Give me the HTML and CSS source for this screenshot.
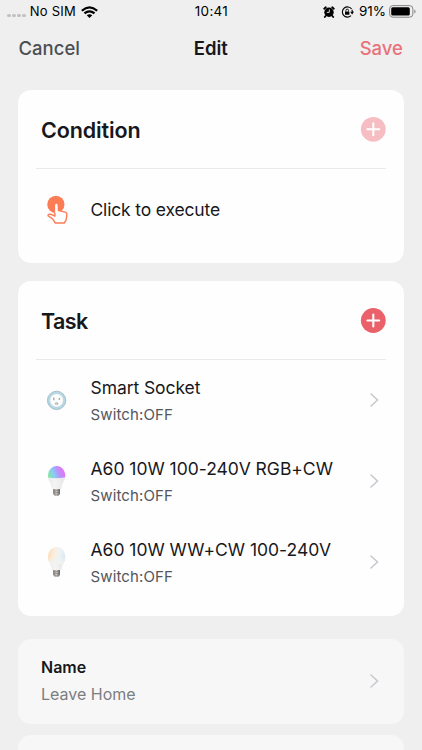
FILE: index.html
```
<!DOCTYPE html>
<html lang="en">
<head>
<meta charset="utf-8">
<meta name="viewport" content="width=device-width, initial-scale=1">
<title>Edit</title>
<link rel="stylesheet" href="styles.css">
</head>
<body>
<div class="screen">
  <header class="status">
    <div class="status-left">
      <span class="dots"><i></i><i></i><i></i><i></i></span>
      <span class="carrier">No SIM</span>
      <svg class="wifi" width="17" height="12" viewBox="0 0 16 12" preserveAspectRatio="none" fill="none" stroke="#000" stroke-width="2.2">
        <path d="M.8 4.7Q8-2 15.2 4.7"/><path d="M3.3 7.4Q8 3.2 12.7 7.4"/><path d="M8 12 5.4 9.3Q8 7.3 10.6 9.3Z" fill="#000" stroke="none"/>
      </svg>
    </div>
    <span class="clock">10:41</span>
    <div class="status-right">
      <svg width="12" height="12" viewBox="0 0 12 12">
        <circle cx="6" cy="6.2" r="4.7"/><path d="M1.2 2.7 2.8 1.3M10.8 2.7 9.2 1.3M2.6 10l-.8 1M9.4 10l.8 1" stroke="#000" stroke-width="1.8" stroke-linecap="round"/><path d="M6.3 3.5V6.4H3.8" fill="none" stroke="#efefef" stroke-width=".9"/>
      </svg>
      <svg class="lock" width="13" height="12" viewBox="0 0 13 12">
        <path d="M10.6 3A5.1 5.1 0 1 0 10 9.7M11.2 7.2A5.1 5.1 0 0 0 10.9 3.7" fill="none" stroke="#000" stroke-width="1.1"/><path d="M9.2 5.8h3.8l-1.9 2.6z"/><rect x="4" y="5.4" width="4.4" height="3.3" rx=".5"/><path d="M4.9 5.5V4.4a1.3 1.3 0 0 1 2.6 0v1.1" fill="none" stroke="#000" stroke-width=".9"/>
      </svg>
      <span class="percent">91%</span>
      <svg class="battery" width="27" height="13" viewBox="0 0 27 13">
        <rect x=".6" y=".6" width="23.3" height="11.6" rx="3.3" fill="none" stroke="#858585" stroke-width="1"/><rect x="2.2" y="2.2" width="18.6" height="8.4" rx="1.5"/><path d="M25.2 4.4q1.5.7 1.5 2t-1.5 2z" fill="#999"/>
      </svg>
    </div>
  </header>

  <nav class="nav">
    <span class="cancel">Cancel</span>
    <h1>Edit</h1>
    <span class="save">Save</span>
  </nav>

  <main>
    <section class="card condition">
      <div class="card-head">
        <h2 class="t-condition">Condition</h2>
        <svg class="add" width="26" height="26" viewBox="0 0 26 26"><circle cx="13.3" cy="13.3" r="12.4" fill="#f6bec3"/><path d="M13.3 7.4v11.8M7.4 13.3h11.8" stroke="#fff" stroke-width="2.1" stroke-linecap="round"/></svg>
      </div>
      <div class="row">
        <svg class="icon" width="32" height="32" viewBox="0 0 32 32">
          <circle cx="14.9" cy="10.4" r="8.6" fill="#fc7c56"/>
          <path d="M13.9 22.2V12a1.5 1.5 0 0 1 3 0v4.3l7.2 1.8q1.8.5 1.8 2.2l-.9 6.1-1.8 2.6H14.3l-2.7-4.1-4.3-2.9q-.7-1.1.6-1.7 2.1-.4 3.7.7l2.3 1z" fill="#fff" stroke="#fc7c56" stroke-width="1.4" stroke-linejoin="round"/>
          <path d="M14.2 11a1.2 1.2 0 0 1 2.4 0v8h-2.4z" fill="#fff"/>
        </svg>
        <span class="title t-click">Click to execute</span>
      </div>
    </section>

    <section class="card task">
      <div class="card-head">
        <h2 class="t-task">Task</h2>
        <svg class="add" width="26" height="26" viewBox="0 0 26 26"><circle cx="13.3" cy="13.5" r="12.4" fill="#eb616a"/><path d="M13.3 7.6v11.8M7.4 13.5h11.8" stroke="#fff" stroke-width="2.1" stroke-linecap="round"/></svg>
      </div>
      <div class="row">
        <svg class="icon" width="32" height="32" viewBox="0 0 32 32">
          <circle cx="15.6" cy="16.4" r="8" fill="#fcfdfd" stroke="#b3d9e7" stroke-width="2.2"/>
          <circle cx="15.6" cy="16.4" r="9.2" fill="none" stroke="#8facb8" stroke-width=".7"/>
          <circle cx="15.6" cy="16.4" r="6.8" fill="none" stroke="#b5c7cd" stroke-width=".6"/>
          <path d="M12.8 13.4v2.8M18.4 13.7v2.2" stroke="#aaa" stroke-width="1.4"/><path d="M14.2 20.2v-.9q1.4-1.6 2.8 0v.9z" fill="#ddd" stroke="#aaa" stroke-width=".8"/>
        </svg>
        <div class="texts"><span class="title t-socket">Smart Socket</span><span class="sub">Switch:OFF</span></div>
        <svg class="chevron" width="9" height="14" viewBox="0 0 9 14"><path d="M1 1l6.5 6L1 13"/></svg>
      </div>
      <div class="row">
        <svg class="icon" width="32" height="32" viewBox="0 0 32 32">
          <defs>
            <linearGradient id="rgb" x1="0" y1=".7" x2="1" y2=".4"><stop stop-color="#86e5a4"/><stop offset=".3" stop-color="#86cff3"/><stop offset=".6" stop-color="#ba92fb"/><stop offset="1" stop-color="#ee6cf2"/></linearGradient>
            <linearGradient id="shell"><stop stop-color="#e8e8e8"/><stop offset=".4" stop-color="#f4f4f4"/><stop offset="1" stop-color="#e5e5e5"/></linearGradient>
            <linearGradient id="metal"><stop stop-color="#777"/><stop offset=".45" stop-color="#d5d0cc"/><stop offset="1" stop-color="#665f5b"/></linearGradient>
          </defs>
          <path d="M7 12.3H24.3q-.3 3-2.6 6l-1.7 6h-8.8l-1.7-6q-2.2-3-2.5-6z" fill="url(#shell)"/>
          <path d="M7 12.6Q6.7 4 12.7 1.5q3.7-1.2 7 .5 4.9 3.2 4.6 10.2-8.6 1.8-17.3.4z" fill="url(#rgb)"/>
          <path d="M12.2 24h6.8v5l-1.6 1.8h-3.6l-1.6-1.8z" fill="url(#metal)"/><path d="M12.2 25.9l6.8-.5M12.2 27.9l6.8-.5M13.6 29.9h4" stroke="#736d69" stroke-width=".6"/>
        </svg>
        <div class="texts"><span class="title t-rgb">A60 10W 100-240V RGB+CW</span><span class="sub">Switch:OFF</span></div>
        <svg class="chevron" width="9" height="14" viewBox="0 0 9 14"><path d="M1 1l6.5 6L1 13"/></svg>
      </div>
      <div class="row">
        <svg class="icon" width="32" height="32" viewBox="0 0 32 32">
          <defs>
            <linearGradient id="white" x2="1" y2=".15"><stop stop-color="#fbdcae"/><stop offset=".4" stop-color="#fbeedf"/><stop offset=".7" stop-color="#eef3f5"/><stop offset="1" stop-color="#dcebf2"/></linearGradient>
            <linearGradient id="fade" x2="0" y2="1"><stop offset=".6" stop-color="#f2f2f2" stop-opacity="0"/><stop offset="1" stop-color="#f2f2f2"/></linearGradient>
          </defs>
          <path d="M7 12.3H24.3q-.3 3-2.6 6l-1.7 6h-8.8l-1.7-6q-2.2-3-2.5-6z" fill="url(#shell)"/>
          <path d="M7 12.6Q6.7 4 12.7 1.5q3.7-1.2 7 .5 4.9 3.2 4.6 10.2-.5 3.3-2.5 5.8H9.5Q7.4 15.6 7 12.6z" fill="url(#white)"/>
          <path d="M7 12.6Q6.7 4 12.7 1.5q3.7-1.2 7 .5 4.9 3.2 4.6 10.2-.5 3.3-2.5 5.8H9.5Q7.4 15.6 7 12.6z" fill="url(#fade)"/>
          <path d="M12.2 24h6.8v5l-1.6 1.8h-3.6l-1.6-1.8z" fill="url(#metal)"/><path d="M12.2 25.9l6.8-.5M12.2 27.9l6.8-.5M13.6 29.9h4" stroke="#736d69" stroke-width=".6"/>
        </svg>
        <div class="texts"><span class="title t-ww">A60 10W WW+CW 100-240V</span><span class="sub">Switch:OFF</span></div>
        <svg class="chevron" width="9" height="14" viewBox="0 0 9 14"><path d="M1 1l6.5 6L1 13"/></svg>
      </div>
    </section>

    <section class="card setting">
      <div class="texts"><span class="label">Name</span><span class="value">Leave Home</span></div>
      <svg class="chevron" width="9" height="14" viewBox="0 0 9 14"><path d="M1 1l6.5 6L1 13"/></svg>
    </section>
    <section class="card setting next"></section>
  </main>
</div>
</body>
</html>
```
FILE: styles.css
```
* { box-sizing: border-box; }
body { margin: 0; }
svg { display: block; flex: none; }
h1, h2 { margin: 0; font-weight: 600; }

.screen {
  width: 422px;
  height: 750px;
  overflow: hidden;
  background: #efefef;
  color: #17181c;
  font-family: Inter, "Liberation Sans", sans-serif;
  white-space: nowrap;
}

.status {
  display: grid;
  grid-template-columns: 1fr auto 1fr;
  align-items: center;
  height: 23px;
  padding: 0 6px 0 7px;
  color: #000;
  font-size: 13px;
  line-height: 23px;
}
.status-left, .status-right { display: flex; align-items: center; }
.status-right { justify-content: flex-end; }
.dots { display: flex; gap: 1.3px; padding-top: 8px; margin-right: 4px; }
.dots i { width: 3.7px; height: 3.7px; border-radius: 50%; background: #c1c1c1; }
.carrier { letter-spacing: .25px; }
.clock { font-size: 13.5px; letter-spacing: .3px; }
.percent { font-size: 13.5px; }
.wifi { margin-left: 5px; }
.lock { margin: 0 5px 0 6px; }
.battery { margin-left: 3px; }

.nav {
  display: grid;
  grid-template-columns: 1fr auto 1fr;
  align-items: center;
  height: 50px;
  padding: 0 19px 0 18.5px;
  font-size: 18.5px;
}
.nav h1 { font-size: 18.5px; }
.cancel { color: #4c4f54; font-weight: 500; }
.save { color: #e8737b; font-weight: 500; text-align: right; }

main { padding: 17px 18px 0; }
.card { border-radius: 13px; background: #fefefe; }
.condition { height: 173px; margin-bottom: 18px; padding: 0 18px; }
.task { height: 335px; margin-bottom: 23px; padding: 0 18px; }
.card-head {
  display: flex;
  align-items: center;
  justify-content: space-between;
  height: 79px;
  padding-left: 5px;
  border-bottom: 1px solid #e9e9ea;
}
.card-head h2 { font-size: 21.5px; padding-top: 2px; }
.card-head .t-condition { letter-spacing: -.12px; }
.card-head .t-task { padding-top: 1px; letter-spacing: -.6px; }

.row { display: flex; align-items: center; height: 81px; padding: 0 7px 0 5px; }
.task .row:nth-child(2) { margin-top: -1px; }
.row .texts { padding-top: 2px; }
.icon { margin-right: 17.5px; }
.texts { display: flex; flex: 1; flex-direction: column; }
.title { font-size: 17.5px; line-height: 27px; }
.t-click { letter-spacing: -.16px; }
.t-socket { letter-spacing: -.08px; }
.t-rgb, .t-ww { letter-spacing: -.02px; }
.sub { font-size: 15px; line-height: 27px; letter-spacing: .12px; color: #54565b; }
.chevron { fill: none; stroke: #c5c8cd; stroke-width: 1.5; stroke-linecap: round; }

.setting {
  display: flex;
  align-items: center;
  height: 85px;
  margin-bottom: 11px;
  padding: 0 25px 2px 23px;
  background: #f7f7f7;
}
.label { font-size: 16px; line-height: 27px; font-weight: 600; }
.value { font-size: 16px; line-height: 27px; color: #7c7e82; }
```
